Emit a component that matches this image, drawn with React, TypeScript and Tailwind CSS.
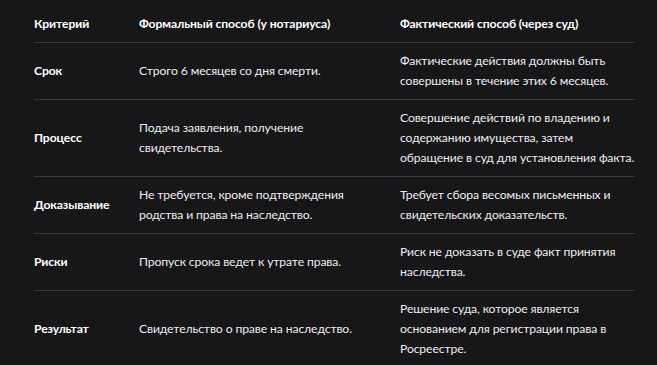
import React from 'react'

const rows = [
  {
    name: 'Срок',
    formal: 'Строго 6 месяцев со дня смерти.',
    actual: 'Фактические действия должны быть совершены в течение этих 6 месяцев.'
  },
  {
    name: 'Процесс',
    formal: 'Подача заявления, получение свидетельства.',
    actual: 'Совершение действий по владению и содержанию имущества, затем обращение в суд для установления факта.'
  },
  {
    name: 'Доказывание',
    formal: 'Не требуется, кроме подтверждения родства и права на наследство.',
    actual: 'Требует сбора весомых письменных и свидетельских доказательств.'
  },
  {
    name: 'Риски',
    formal: 'Пропуск срока ведет к утрате права.',
    actual: 'Риск не доказать в суде факт принятия наследства.'
  },
  {
    name: 'Результат',
    formal: 'Свидетельство о праве на наследство.',
    actual: 'Решение суда, которое является основанием для регистрации права в Росреестре.'
  }
]

export default function App() {
  return <div className="min-h-screen bg-[#171719] text-[#ececec] text-[12.2px] tracking-[-0.12px] leading-5 font-['Lato',sans-serif] pl-[34px] pr-[22px] pt-[6px]">
    <table className="w-[601px] table-fixed border-collapse">
      <colgroup>
        <col className="w-[105px]" />
        <col className="w-[261px]" />
        <col className="w-[235px]" />
      </colgroup>
      <thead>
        <tr className="border-b border-[#3a3a3c]">
          <th className="text-left font-bold text-white pt-2 pb-2 pr-4 align-middle">Критерий</th>
          <th className="text-left font-bold text-white pt-2 pb-2 pr-4 align-middle">Формальный способ (у нотариуса)</th>
          <th className="text-left font-bold text-white pt-2 pb-2 align-middle">Фактический способ (через суд)</th>
        </tr>
      </thead>
      <tbody>
        {rows.map((row, i) => {
          return <tr key={row.name} className={i < rows.length - 1 ? 'border-b border-[#3a3a3c]' : ''}>
            <td className="font-bold text-white py-2 pr-4 align-middle">{row.name}</td>
            <td className="py-2 pr-4 align-middle">{row.formal}</td>
            <td className="py-2 align-middle">{row.actual}</td>
          </tr>
        })}
      </tbody>
    </table>
  </div>
}
